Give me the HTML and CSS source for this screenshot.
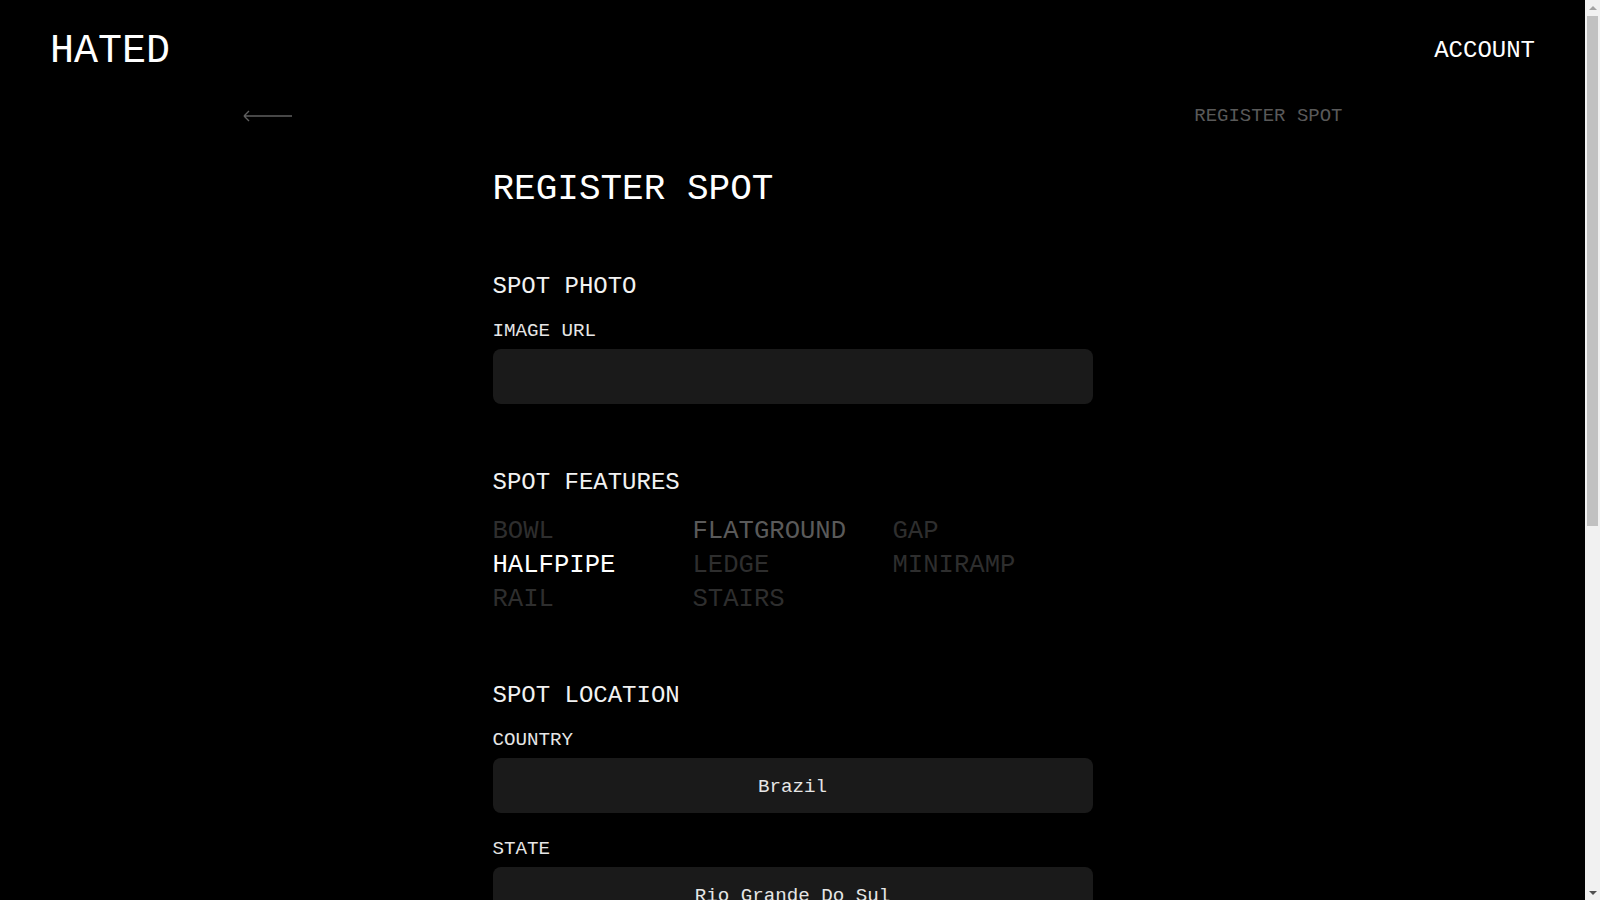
FILE: index.html
```html
<!DOCTYPE html>
<html lang="en">
<head>
<meta charset="utf-8">
<title>HATED - Register Spot</title>
<link rel="stylesheet" href="styles.css">
</head>
<body>
<div class="page">
<header class="topbar">
  <a class="logo" href="#">HATED</a>
  <a class="account" href="#">ACCOUNT</a>
</header>
<nav class="crumbs">
  <a class="back" href="#" aria-label="Back">
    <svg width="50" height="14" viewBox="0 0 50 14"><path d="M1 7 H49 M1 7 L6 2 M1 7 L6 12" fill="none" stroke="#5f5f5f" stroke-width="1.4"/></svg>
  </a>
  <span class="crumb-title">REGISTER SPOT</span>
</nav>
<main class="form">
  <h1 class="title">REGISTER SPOT</h1>

  <section class="section s-photo">
    <h2 class="section-title">SPOT PHOTO</h2>
    <div class="field">
      <label class="label">IMAGE URL</label>
      <input class="input" type="text" value="">
    </div>
  </section>

  <section class="section">
    <h2 class="section-title">SPOT FEATURES</h2>
    <ul class="features">
      <li class="feature">BOWL</li>
      <li class="feature hover">FLATGROUND</li>
      <li class="feature">GAP</li>
      <li class="feature selected">HALFPIPE</li>
      <li class="feature">LEDGE</li>
      <li class="feature">MINIRAMP</li>
      <li class="feature">RAIL</li>
      <li class="feature">STAIRS</li>
    </ul>
  </section>

  <section class="section">
    <h2 class="section-title">SPOT LOCATION</h2>
    <div class="field">
      <label class="label">COUNTRY</label>
      <input class="input" type="text" value="Brazil">
    </div>
    <div class="field">
      <label class="label">STATE</label>
      <input class="input" type="text" value="Rio Grande Do Sul">
    </div>
    <div class="field">
      <label class="label">CITY</label>
      <input class="input" type="text" value="Porto Alegre">
    </div>
  </section>

  <section class="section">
    <h2 class="section-title">SPOT INFO</h2>
    <div class="field">
      <label class="label">NAME</label>
      <input class="input" type="text" value="">
    </div>
  </section>

  <button class="submit" type="button">REGISTER</button>
</main>
</div>
<div class="fake-scrollbar" aria-hidden="true">
  <span class="sb-up"></span>
  <span class="sb-thumb"></span>
  <span class="sb-down"></span>
</div>
</body>
</html>
```
FILE: styles.css
```css
* { box-sizing: border-box; }
html, body { margin: 0; padding: 0; }
html::-webkit-scrollbar { display: none; }
body {
  background: #000;
  color: #fff;
  font-family: "Liberation Mono", "Courier New", monospace;
}
.page { margin-right: 15px; }
a { color: inherit; text-decoration: none; }

.topbar {
  height: 98px;
  padding: 0 50px;
  display: flex;
  align-items: center;
  justify-content: space-between;
}
.logo { font-size: 40px; line-height: 48px; color: #fff; margin-top: 6px; }
.account { font-size: 24px; line-height: 30px; color: #fff; margin-top: 4px; }

.crumbs {
  width: 1100px;
  margin: 6px auto 0;
  height: 24px;
  display: flex;
  align-items: center;
  justify-content: space-between;
}
.back { display: flex; align-items: center; }
.back svg { display: block; }
.crumb-title { font-size: 19px; line-height: 24px; color: #595959; }

.form {
  width: 600px;
  margin: 0 auto;
  padding-bottom: 185px;
}
.title {
  margin: 40px 0 0;
  padding-top: 2px;
  font-weight: normal;
  font-size: 36px;
  line-height: 40px;
  color: #fff;
}
.section { margin-top: 62px; }
.section.s-photo { margin-top: 60px; }
.section-title {
  margin: 0;
  padding-top: 2px;
  font-weight: normal;
  font-size: 24px;
  line-height: 30px;
  color: #f2f2f2;
}
.field { margin-top: 17px; display: flex; flex-direction: column; }
.field + .field { margin-top: 24px; }
.label {
  padding-top: 1px;
  font-size: 19.2px;
  line-height: 22px;
  color: #e6e6e6;
  margin-bottom: 7px;
}
.input {
  width: 100%;
  height: 55px;
  border: none;
  outline: none;
  border-radius: 8px;
  background: #1a1a1a;
  color: #e6e6e6;
  font-family: "Liberation Mono", "Courier New", monospace;
  font-size: 19.2px;
  text-align: center;
  padding: 2px 16px 0;
}

.features {
  list-style: none;
  margin: 17px 0 0;
  padding: 0;
  display: grid;
  grid-template-columns: repeat(3, 1fr);
}
.feature {
  font-size: 25.6px;
  line-height: 34px;
  color: #2e2e2e;
}
.feature.hover { color: #5a5a5a; }
.feature.selected { color: #fff; }

.submit {
  margin-top: 64px;
  width: 100%;
  height: 60px;
  border: 1px solid #fff;
  border-radius: 8px;
  background: #000;
  color: #fff;
  font-family: "Liberation Mono", "Courier New", monospace;
  font-size: 24px;
}

.fake-scrollbar {
  position: fixed;
  top: 0;
  right: 0;
  width: 15px;
  height: 100vh;
  background: #f1f1f1;
}
.sb-up, .sb-down {
  position: absolute;
  left: 4px;
  width: 0;
  height: 0;
  border-left: 4px solid transparent;
  border-right: 4px solid transparent;
}
.sb-up { top: 6px; border-bottom: 4px solid #a3a3a3; }
.sb-down { bottom: 5px; border-top: 4px solid #505050; }
.sb-thumb {
  position: absolute;
  top: 16px;
  left: 2px;
  width: 11px;
  height: 510px;
  background: #c1c1c1;
}
```
